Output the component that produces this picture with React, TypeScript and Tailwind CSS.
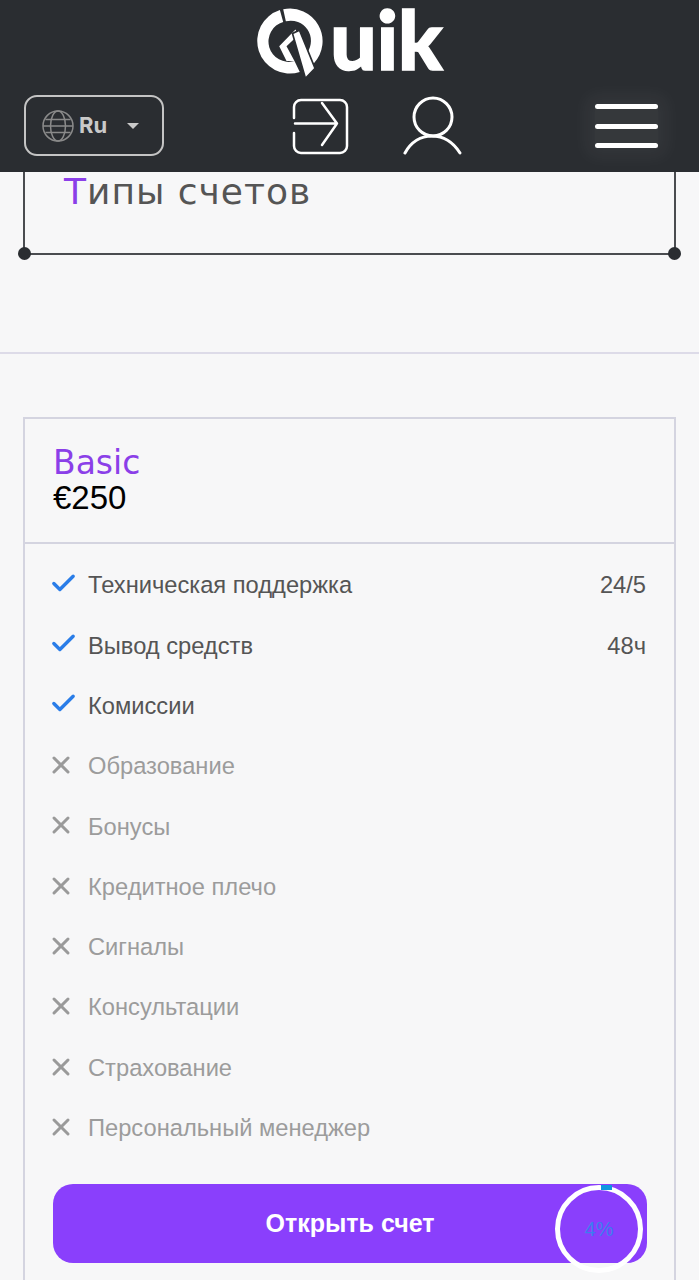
import { Check, X } from "lucide-react";

const features = [
  { label: "Техническая поддержка", value: "24/5", on: true },
  { label: "Вывод средств", value: "48ч", on: true },
  { label: "Комиссии", on: true },
  { label: "Образование" },
  { label: "Бонусы" },
  { label: "Кредитное плечо" },
  { label: "Сигналы" },
  { label: "Консультации" },
  { label: "Страхование" },
  { label: "Персональный менеджер" },
];

function LogoQ() {
  return (
    <svg viewBox="20 20 200 220" className="w-[67px] h-[73px] shrink-0" fill="#fff">
      {/* ring, left and right halves */}
      <path d="M88 29 A98 98 0 0 0 148 216 L132 183 A61 61 0 0 1 98 65 Z" />
      <path d="M98 27 A98 98 0 0 1 190 190 L170 158 A61 61 0 0 0 106 63 Z" />
      {/* inner chevron */}
      <path d="M135 88 L86 138 L108 183 L132 183 L108 138 L143 105 Z" />
      {/* tail */}
      <path d="M126 100 L165 235 L194 205 L147 90 Z" stroke="#2a2d31" strokeWidth="5" />
    </svg>
  );
}

function Header() {
  return (
    <header className="h-[172px] bg-[#2a2d31] flex flex-col shrink-0">
      <div className="h-[95px] flex items-start justify-center pt-[7px] pl-[1px]">
        <LogoQ />
        <span className="font-['Lato'] font-black text-[82px] leading-[60px] mt-[1px] text-white ml-[6px] [-webkit-text-stroke:1.5px_white]">
          uik
        </span>
      </div>
      <div className="w-full flex items-start pl-[24px] pr-[41px]">
        <button className="w-[140px] h-[61px] border-2 border-[#c4c4c4] rounded-[13px] flex items-center pl-[16px]">
          <svg viewBox="0 0 32 32" className="w-[32px] h-[32px]" fill="none" stroke="#8a8a8a" strokeWidth="1.5">
            <circle cx="16" cy="16" r="15" />
            <ellipse cx="16" cy="16" rx="7.5" ry="15" />
            <path d="M3.5 9.5h25M3.5 22.5h25M1 16h30" />
          </svg>
          <span className="font-['Inter'] font-bold text-[22px] text-[#c9c9c9] ml-[5px]">Ru</span>
          <span className="ml-[20px] w-0 h-0 border-x-[6px] border-x-transparent border-t-[6px] border-t-[#c9c9c9]" />
        </button>
        <svg
          viewBox="0 0 57 57"
          className="w-[57px] h-[57px] ml-[128px] mt-[3px]"
          fill="none"
          stroke="#fff"
          strokeWidth="2.5"
          strokeLinecap="round"
          strokeLinejoin="round"
        >
          <path d="M2 20V9a7 7 0 0 1 7-7h39a7 7 0 0 1 7 7v39a7 7 0 0 1-7 7H9a7 7 0 0 1-7-7V35" />
          <path d="M3 25.5h42M30 5l15 20.5L30 47" />
        </svg>
        <svg
          viewBox="0 0 60 60"
          className="w-[60px] h-[60px] ml-[54px] mt-[1px]"
          fill="none"
          stroke="#fff"
          strokeWidth="3"
          strokeLinecap="round"
        >
          <circle cx="30" cy="21" r="19" />
          <path d="M2 57C8 46 18 40 29 40s21 6 28 17" />
        </svg>
        <button className="ml-auto w-[63px] flex flex-col gap-[14.5px] mt-[9px] shadow-[0_0_18px_8px_rgba(255,255,255,0.05)] bg-white/5">
          <span className="h-[5px] bg-white rounded-full" />
          <span className="h-[5px] bg-white rounded-full" />
          <span className="h-[5px] bg-white rounded-full" />
        </button>
      </div>
    </header>
  );
}

export default function App() {
  return (
    <div className="relative w-[699px] h-[1280px] overflow-hidden bg-[#f7f7f8] font-['Liberation_Sans',sans-serif]">
      <Header />

      {/* Title box */}
      <section className="relative mx-[23px] h-[83px] border-x-2 border-b-2 border-[#4a4c50] pl-[39px]">
        <h2 className="font-['DejaVu_Sans'] text-[36px] leading-[40px] tracking-[1px] text-[#555]">
          <span className="text-[#8b3fe8]">Т</span>ипы счетов
        </h2>
        <span className="absolute -left-[7px] -bottom-[7px] w-[13px] h-[13px] rounded-full bg-[#2a2d31]" />
        <span className="absolute -right-[7px] -bottom-[7px] w-[13px] h-[13px] rounded-full bg-[#2a2d31]" />
      </section>

      <hr className="mt-[97px] border-t-2 border-[#dddbe8]" />

      {/* Tariff card */}
      <section className="mx-[23px] mt-[63px] border-2 border-[#d4d4e0] pb-[60px]">
        <div className="h-[125px] border-b-2 border-[#d4d4e0] pl-[28px] pt-[25px]">
          <div className="font-['DejaVu_Sans'] text-[33px] leading-[38px] text-[#8b3fe8]">Basic</div>
          <div className="text-[33px] leading-[34px] -mt-[1px] text-black">€250</div>
        </div>
        <ul className="px-[28px] pt-[12px] text-[23.7px]">
          {features.map((f) => (
            <li key={f.label} className="h-[60.3px] flex items-center">
              {f.on ? (
                <>
                  <Check className="w-[29px] h-[29px] -ml-[4px] -mt-[6px] text-[#2a7de8]" strokeWidth={2.8} />
                  <span className="ml-[10px] text-[#555]">{f.label}</span>
                </>
              ) : (
                <>
                  <X className="w-[28px] h-[28px] -ml-[6px] -mt-[4px] text-[#9a9a9a]" strokeWidth={2.6} />
                  <span className="ml-[13px] text-[#9c9c9c]">{f.label}</span>
                </>
              )}
              {f.value && <span className="ml-auto text-[#555]">{f.value}</span>}
            </li>
          ))}
        </ul>
        <button className="mt-[25px] w-[594px] mx-[28px] block h-[79px] rounded-[20px] bg-[#8a3ffc] text-white font-bold text-[25px]">
          Открыть счет
        </button>
      </section>

      {/* Scroll progress */}
      <div className="absolute left-[555px] top-[1185px] w-[88px] h-[88px] rounded-full flex items-center justify-center border-[5px] border-white">
        <span className="absolute -top-[5px] left-[41px] w-[11px] h-[5px] bg-[#0f96e0]" />
        <span className="text-[20px] text-[#3d7cf0]">4%</span>
      </div>
    </div>
  );
}
